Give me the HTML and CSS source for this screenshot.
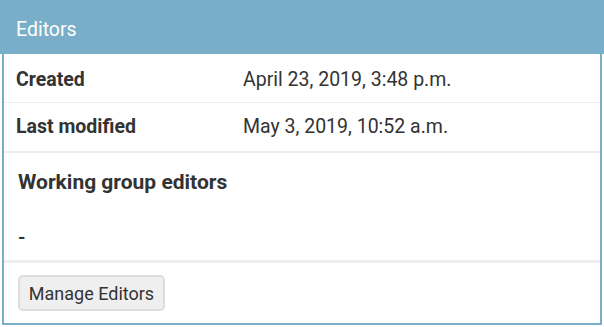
FILE: index.html
```html
<!DOCTYPE html>
<html>
<head>
<meta charset="utf-8">
<link rel="stylesheet" href="styles.css">
</head>
<body>
<div class="module">
  <h2 class="caption">Editors</h2>
  <div class="box">
    <div class="row row-first">
      <div class="label">Created</div>
      <div class="value">April 23, 2019, 3:48 p.m.</div>
    </div>
    <div class="row row-second">
      <div class="label">Last modified</div>
      <div class="value">May 3, 2019, 10:52 a.m.</div>
    </div>
    <div class="group">
      <h3 class="group-title">Working group editors</h3>
      <p class="group-empty">-</p>
    </div>
    <div class="actions">
      <button class="btn" type="button">Manage Editors</button>
    </div>
  </div>
</div>
</body>
</html>
```
FILE: styles.css
```css
html, body {
  margin: 0;
  padding: 0;
  background: #fff;
}
body {
  font-family: Roboto, "Liberation Sans", sans-serif;
  color: #333;
  width: 604px;
  height: 327px;
}
.module {
  display: flex;
  flex-direction: column;
}
.caption {
  margin: 0;
  height: 54px;
  box-sizing: border-box;
  padding: 18px 16px 12px;
  line-height: 24px;
  font-size: 19.5px;
  font-weight: 400;
  background: #79aec8;
  color: #fff;
}
.box {
  margin: 0 2px;
  border: 2px solid #79aec8;
  border-top: none;
  height: 271px;
  box-sizing: border-box;
  display: flex;
  flex-direction: column;
}
.row {
  display: grid;
  grid-template-columns: 227px 1fr;
  padding: 0 12px;
  font-size: 19.5px;
  line-height: 24px;
}
.row-first {
  padding-top: 14px;
  padding-bottom: 10px;
  border-bottom: 1px solid #eee;
}
.row-second {
  padding-top: 12px;
  padding-bottom: 12px;
  border-bottom: 2px solid #eee;
}
.label {
  font-weight: 700;
}
.value {
  font-weight: 400;
}
.group {
  padding: 0 14px;
  height: 110px;
  box-sizing: border-box;
  border-bottom: 3px solid #eee;
}
.group-title {
  margin: 0;
  padding-top: 16px;
  font-size: 21px;
  line-height: 26px;
  font-weight: 700;
}
.group-empty {
  margin: 0;
  padding-top: 31px;
  font-size: 19px;
  line-height: 24px;
  font-weight: 700;
}
.actions {
  padding: 12px 14px;
}
.btn {
  font-family: Roboto, "Liberation Sans", sans-serif;
  font-size: 18px;
  color: #333;
  background: #efefef;
  border: 2px solid #ddd;
  border-radius: 5px;
  width: 147px;
  height: 36px;
  padding: 0;
  display: flex;
  align-items: center;
  justify-content: center;
}
```
